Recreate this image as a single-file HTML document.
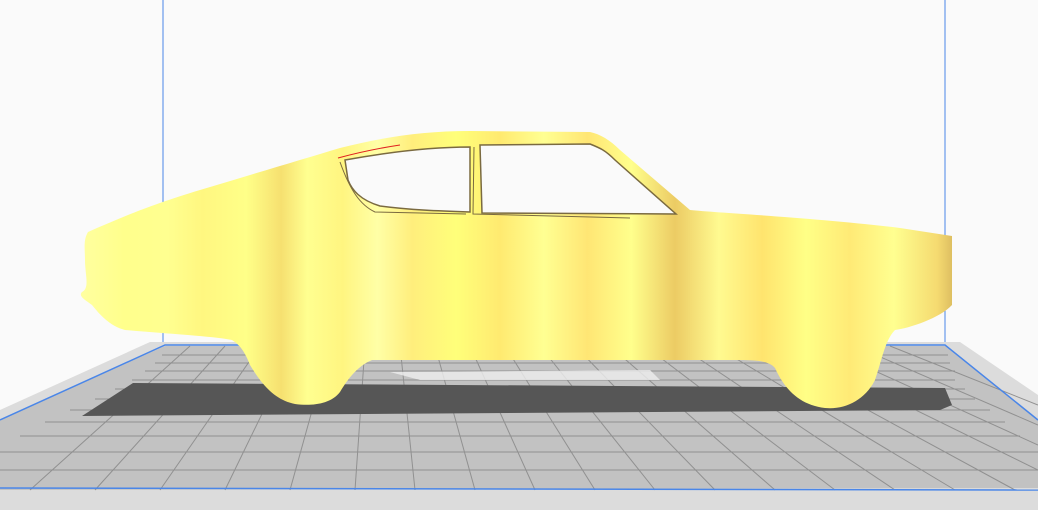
<!DOCTYPE html>
<html><head><style>html,body{margin:0;padding:0;background:#fafafa;overflow:hidden}svg{display:block}</style></head><body>
<svg width="1038" height="510" viewBox="0 0 1038 510" xmlns="http://www.w3.org/2000/svg">
<defs>
<linearGradient id="car" x1="80" y1="0" x2="955" y2="0" gradientUnits="userSpaceOnUse">
<stop offset="0" stop-color="#ffffa0"/><stop offset="0.05" stop-color="#ffff8c"/>
<stop offset="0.1" stop-color="#ffff90"/><stop offset="0.14" stop-color="#fff780"/>
<stop offset="0.19" stop-color="#ffff88"/><stop offset="0.23" stop-color="#f6e070"/>
<stop offset="0.26" stop-color="#ffff90"/><stop offset="0.3" stop-color="#fff580"/>
<stop offset="0.34" stop-color="#ffffa6"/><stop offset="0.38" stop-color="#ffee7c"/>
<stop offset="0.43" stop-color="#ffff7a"/><stop offset="0.48" stop-color="#ffea70"/>
<stop offset="0.53" stop-color="#ffff92"/><stop offset="0.58" stop-color="#ffe674"/>
<stop offset="0.63" stop-color="#ffff8c"/><stop offset="0.68" stop-color="#eccb64"/>
<stop offset="0.73" stop-color="#fffa90"/><stop offset="0.78" stop-color="#ffe46e"/>
<stop offset="0.83" stop-color="#ffff86"/><stop offset="0.88" stop-color="#ffea76"/>
<stop offset="0.93" stop-color="#ffff90"/><stop offset="0.98" stop-color="#f5da70"/>
<stop offset="1" stop-color="#d9b95e"/>
</linearGradient>
</defs>
<line x1="163" y1="0" x2="163" y2="345" stroke="#4a86e8" stroke-width="1"/>
<line x1="945" y1="0" x2="945" y2="345" stroke="#4a86e8" stroke-width="1"/>
<polygon points="150,342 960,342 1038,395 1038,510 0,510 0,410" fill="#dcdcdc"/>
<polygon points="165,346 945,346 1038,420 1038,488 0,490 0,420" fill="#c2c2c2"/>
<g stroke="#909090" stroke-width="1">
<line x1="0" y1="470" x2="1038" y2="470"/><line x1="0" y1="452" x2="1038" y2="452"/>
<line x1="20" y1="436" x2="1020" y2="436"/><line x1="45" y1="422" x2="1005" y2="422"/>
<line x1="70" y1="410" x2="990" y2="410"/><line x1="95" y1="399" x2="975" y2="399"/>
<line x1="115" y1="389" x2="965" y2="389"/><line x1="132" y1="380" x2="955" y2="380"/>
<line x1="145" y1="371" x2="955" y2="371"/><line x1="155" y1="363" x2="950" y2="363"/>
<line x1="162" y1="355" x2="948" y2="355"/>
</g>
<g stroke="#909090" stroke-width="1">
<line x1="190" y1="346" x2="30" y2="490"/><line x1="225" y1="346" x2="95" y2="490"/>
<line x1="260" y1="346" x2="160" y2="490"/><line x1="295" y1="346" x2="225" y2="490"/>
<line x1="330" y1="346" x2="290" y2="490"/><line x1="365" y1="346" x2="355" y2="490"/>
<line x1="400" y1="346" x2="415" y2="490"/><line x1="435" y1="346" x2="475" y2="490"/>
<line x1="470" y1="346" x2="535" y2="490"/><line x1="505" y1="346" x2="595" y2="490"/>
<line x1="540" y1="346" x2="655" y2="490"/><line x1="575" y1="346" x2="715" y2="490"/>
<line x1="610" y1="346" x2="775" y2="490"/><line x1="645" y1="346" x2="835" y2="490"/>
<line x1="680" y1="346" x2="895" y2="490"/><line x1="715" y1="346" x2="955" y2="490"/>
<line x1="750" y1="346" x2="1015" y2="490"/><line x1="785" y1="346" x2="1038" y2="470"/>
<line x1="820" y1="346" x2="1038" y2="445"/><line x1="855" y1="346" x2="1038" y2="425"/>
<line x1="890" y1="346" x2="1038" y2="405"/>
</g>
<polyline points="0,420 165,345 945,345 1038,420" fill="none" stroke="#4a86e8" stroke-width="1.5"/>
<line x1="0" y1="488" x2="1038" y2="490" stroke="#4a86e8" stroke-width="1.5"/>
<polygon points="133,383 945,388 952,405 940,410 82,416" fill="#565656"/>
<polygon points="390,372 650,370 660,380 420,380" fill="#eeeeee" opacity="0.8"/>
<path fill="url(#car)" d="M88,232 C120,218 150,205 200,190 C250,175 300,160 340,148 C380,138 420,131 470,131 L590,132 C600,134 610,140 620,150 L690,210 C720,213 820,218 900,228 L952,236 L952,305 C940,318 910,328 895,330 C885,340 882,360 875,380 C865,400 845,410 825,408 C800,405 785,390 775,368 C770,362 760,360 740,360 L372,360 C360,365 350,375 340,392 C330,405 310,406 295,404 C275,400 262,385 250,365 C245,352 240,345 232,340 C210,336 170,334 125,330 C110,326 100,315 92,305 C85,300 78,296 82,292 C90,288 85,275 85,260 C85,250 83,240 88,232 Z"/>
<path d="M345,160 C400,150 440,147 470,147 L470,212 C440,211 410,210 380,206 C360,200 352,190 348,180 Z" fill="#fafafa" stroke="#7a6a40" stroke-width="1.5"/>
<path d="M338,158 C360,152 380,148 400,145" stroke="#e02020" stroke-width="1" fill="none"/>
<path d="M340,162 C350,190 360,205 375,212 L466,214" stroke="#7a6a40" stroke-width="1" fill="none"/>
<path d="M480,145 L590,144 C600,148 605,150 615,160 L676,214 L482,213 Z" fill="#fafafa" stroke="#7a6a40" stroke-width="1.5"/>
<path d="M474,147 L473,214 L630,218" stroke="#7a6a40" stroke-width="1" fill="none"/>
</svg>
</body></html>
